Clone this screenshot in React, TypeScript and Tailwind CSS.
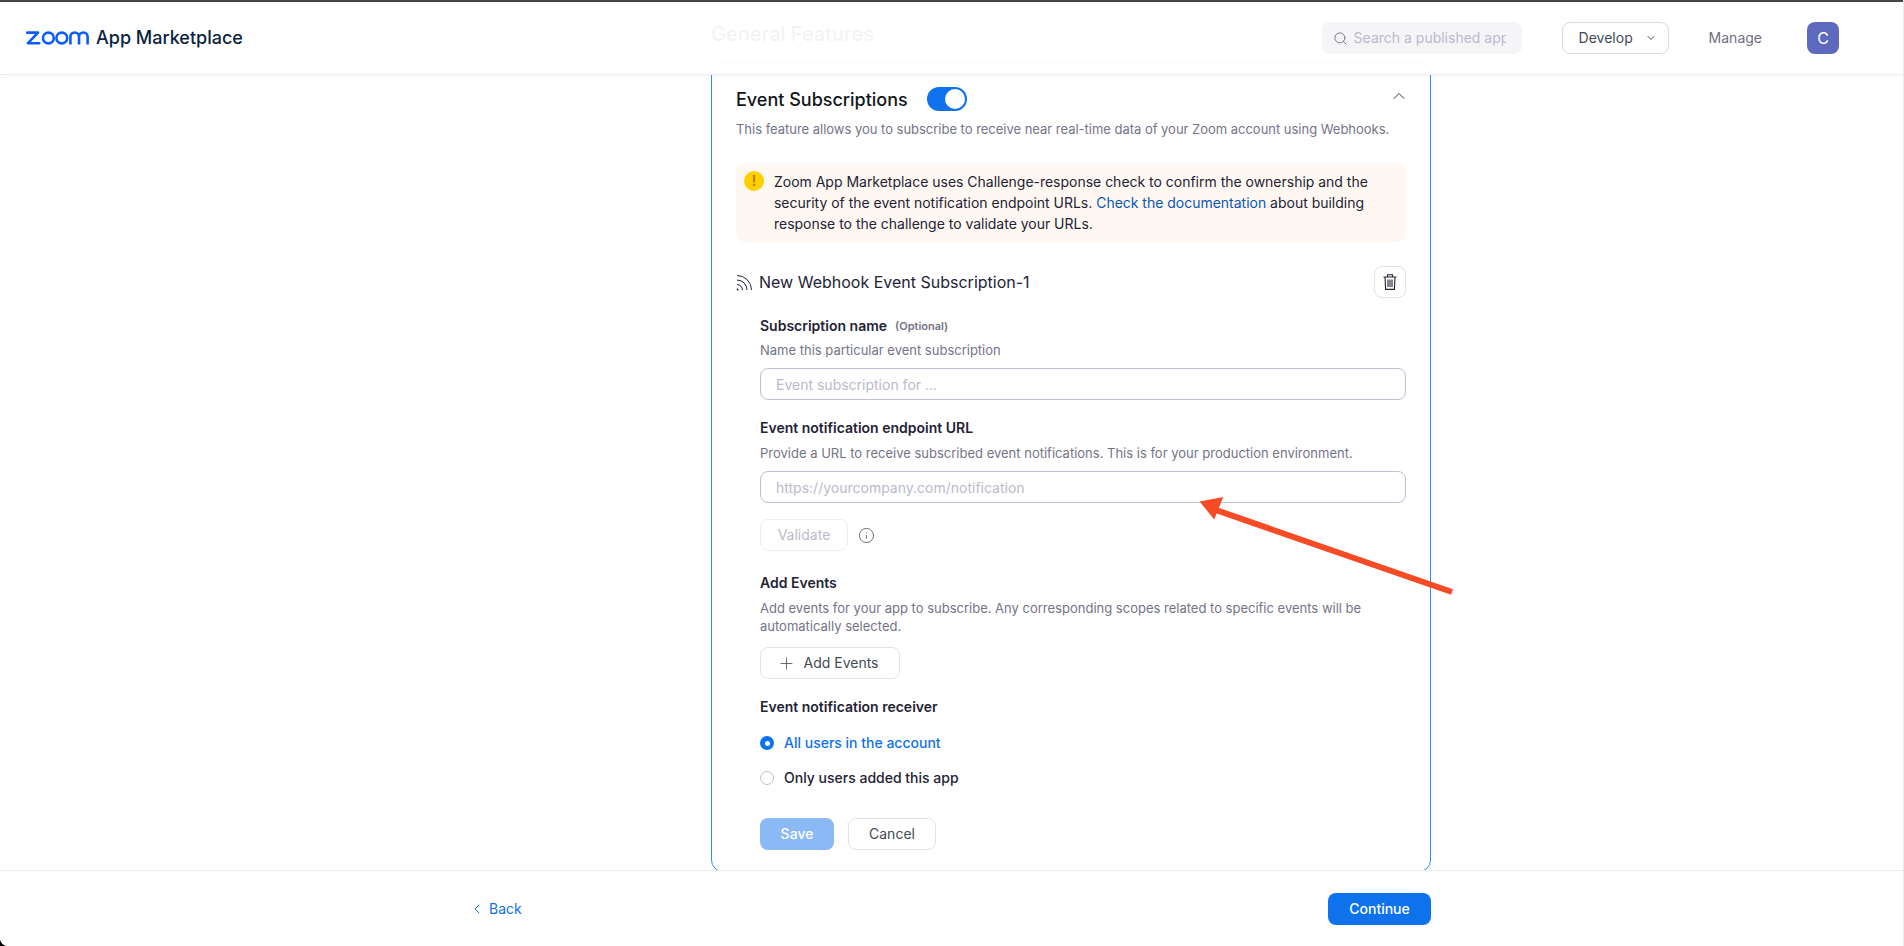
import { ChevronDown, ChevronLeft, ChevronUp, Info, Plus, Search } from 'lucide-react'

const ZoomLogo = () => (
  <svg width="63" height="14" viewBox="0 0 63 14" fill="none" stroke="#0b5cff" strokeWidth="2.6">
    <path d="M1.2 1.6H12L2 12.2H13.2" strokeLinejoin="round" strokeLinecap="round" />
    <circle cx="22.4" cy="7" r="5.4" />
    <circle cx="35.8" cy="7" r="5.4" />
    <path d="M44.4 13.4V5.8a4.3 4.3 0 0 1 8.6 0v7.6M53 13.4V5.8a4.3 4.3 0 0 1 8.6 0v7.6" />
  </svg>
)

const TrashIcon = () => (
  <svg width="18" height="18" viewBox="0 0 18 18" fill="none" stroke="#232333" strokeWidth="1.1">
    <path d="M2.5 4h13M6.5 4V1.8h5V4M4 4l.6 12.4h8.8L14 4M7 6.5v7.5M9 6.5v7.5M11 6.5v7.5" />
  </svg>
)

const FeedIcon = () => (
  <svg width="17" height="17" viewBox="0 0 17 17" fill="none" stroke="#232333" strokeWidth="1" className="shrink-0">
    <path d="M1 10.5a5.5 5.5 0 0 1 5.5 5.5M1 6a10 10 0 0 1 10 10M1 1.5A14.5 14.5 0 0 1 15.5 16" />
    <circle cx="1.6" cy="15.4" r="1" fill="#232333" stroke="none" />
  </svg>
)

const Arrow = () => (
  <svg
    className="absolute left-[1190px] top-[490px] pointer-events-none"
    width="270"
    height="110"
    viewBox="0 0 270 110"
    fill="none"
  >
    <path d="M20 18L262 102" stroke="#f74b25" strokeWidth="6" />
    <path d="M11 12L32 8L24 28Z" fill="#f74b25" stroke="#f74b25" strokeWidth="1.5" />
  </svg>
)

const labelClass = 'text-sm leading-5 font-semibold text-[#232333]'
const hintClass = 'text-[13px] leading-[18px] text-[#747487]'
const inputClass =
  'block w-full h-8 rounded-lg border border-[#bfbfd1] bg-white px-[15px] text-sm outline-none placeholder:text-[#babacc]'
const outlineBtn = 'h-8 rounded-lg border border-[#dfe3e8] bg-white text-sm'

export default function App() {
  return (
    <div className="h-[946px] bg-black">
      <div className="relative h-[946px] overflow-hidden rounded-bl-lg border-r border-r-[#ececec] bg-white flex flex-col font-['Inter',sans-serif] text-[#232333]">
        <header className="relative z-10 h-[75px] shrink-0 flex items-center border-b border-t-2 border-b-[#ededf0] border-t-[#444444] bg-white/95 shadow-[0_1px_4px_rgba(0,0,0,0.04)] pl-[26px]">
          <ZoomLogo />
          <span className="ml-[7px] text-lg font-medium text-[#0b1f3f]">App Marketplace</span>
          <div className="ml-auto flex items-center">
            <div className="flex items-center w-[200px] h-8 rounded-lg bg-[#f5f5f8] pl-[11px] pr-4">
              <Search size={15} strokeWidth={1.5} className="text-[#6e7680] shrink-0" />
              <input
                className="ml-[6px] min-w-0 flex-1 bg-transparent text-sm outline-none placeholder:text-[#babacc]"
                placeholder="Search a published app"
              />
            </div>
            <div className="ml-10 flex items-center w-[107px] h-8 rounded-lg border border-[#d9d9e5] pl-4 text-sm text-[#444b53]">
              Develop
              <ChevronDown size={12} strokeWidth={2} className="ml-3" />
            </div>
            <span className="ml-10 text-sm text-[#6e6e7f]">Manage</span>
            <div className="ml-[45px] mr-[64px] flex items-center justify-center w-8 h-8 rounded-lg bg-[#5c69bf] text-base text-white">
              C
            </div>
          </div>
        </header>

        <main className="flex-1 min-h-0 overflow-hidden -mt-[75px] pl-[711px] pt-[20px]">
          <h2 className="text-xl leading-7 font-medium text-[#131619] mb-[14px]">General Features</h2>
          <section className="w-[720px] rounded-xl border border-[#2d8cff] px-6 pt-6 pb-[21px]">
            <div className="flex items-center h-6">
              <h3 className="mt-[2px] text-lg font-medium text-[#131619]">Event Subscriptions</h3>
              <div className="ml-[19px] flex items-center justify-end w-10 h-6 rounded-full bg-[#0e72ed] pr-[2px]">
                <div className="w-5 h-5 rounded-full bg-white" />
              </div>
              <ChevronUp size={20} strokeWidth={1.1} className="ml-auto mr-[-3px] -mt-[6px] text-[#232333]" />
            </div>
            <p className="mt-2 text-[13px] leading-5 tracking-[-0.02px] text-[#747487]">
              This feature allows you to subscribe to receive near real-time data of your Zoom account using Webhooks.
            </p>

            <div className="mt-6 flex rounded-lg bg-[#fff8f2] py-2 pl-2 pr-3">
              <div className="flex items-center justify-center w-5 h-5 shrink-0 rounded-full bg-[#ffd000] text-sm font-semibold text-[#b57a00]">
                !
              </div>
              <p className="ml-[10px] text-sm leading-[21px] tracking-[-0.015px] text-[#232333]">
                Zoom App Marketplace uses Challenge-response check to confirm the ownership and the security of the
                event notification endpoint URLs. <span className="text-[#0956b5]">Check the documentation</span> about
                building response to the challenge to validate your URLs.
              </p>
            </div>

            <div className="mt-6 flex items-center h-8">
              <FeedIcon />
              <span className="ml-[6px] text-base text-[#232333]">New Webhook Event Subscription-1</span>
              <button className="ml-auto flex items-center justify-center w-8 h-8 rounded-lg border border-[#dfe3e8] bg-white">
                <TrashIcon />
              </button>
            </div>

            <div className="ml-6">
              <div className="mt-[18px] flex items-center">
                <span className={labelClass}>Subscription name</span>
                <span className="ml-2 text-[11px] font-semibold text-[#747487]">(Optional)</span>
              </div>
              <p className={`mt-[5px] ${hintClass}`}>Name this particular event subscription</p>
              <input className={`mt-[9px] ${inputClass}`} placeholder="Event subscription for ..." />

              <div className={`mt-[18px] ${labelClass}`}>Event notification endpoint URL</div>
              <p className={`mt-[6px] ${hintClass}`}>
                Provide a URL to receive subscribed event notifications. This is for your production environment.
              </p>
              <input className={`mt-[9px] ${inputClass}`} placeholder="https://yourcompany.com/notification" />

              <div className="mt-4 flex items-center">
                <button className="h-8 w-[88px] rounded-lg border border-[#edeef1] bg-white text-sm text-[#babacc]">
                  Validate
                </button>
                <Info size={17} strokeWidth={1.1} className="ml-[10px] text-[#444b53]" />
              </div>

              <div className={`mt-[22px] ${labelClass}`}>Add Events</div>
              <p className={`mt-[6px] ${hintClass}`}>
                Add events for your app to subscribe. Any corresponding scopes related to specific events will be
                automatically selected.
              </p>
              <button className={`mt-3 flex items-center justify-center w-[140px] pr-1 text-[#444b53] ${outlineBtn}`}>
                <Plus size={19} strokeWidth={1} className="mr-[7px]" />
                Add Events
              </button>

              <div className={`mt-[18px] ${labelClass}`}>Event notification receiver</div>
              <div className="mt-4 flex items-center h-5">
                <div className="flex items-center justify-center w-[14px] h-[14px] rounded-full bg-[#0e72ed]">
                  <div className="w-[5px] h-[5px] rounded-full bg-white" />
                </div>
                <span className="ml-[10px] text-sm font-medium text-[#0e72ed]">All users in the account</span>
              </div>
              <div className="mt-[15px] flex items-center h-5">
                <div className="w-[14px] h-[14px] rounded-full border border-[#bfbfd1] bg-white" />
                <span className="ml-[10px] text-sm font-medium text-[#232333]">Only users added this app</span>
              </div>

              <div className="mt-[30px] flex">
                <button className="h-8 w-[74px] rounded-lg bg-[#8ab9f6] text-sm font-medium text-white">Save</button>
                <button className={`ml-[14px] w-[88px] text-[#444b53] ${outlineBtn}`}>Cancel</button>
              </div>
            </div>
          </section>
        </main>

        <footer className="relative z-10 h-[76px] shrink-0 flex items-center justify-between border-t border-[#ededf0] bg-white pl-[469px] pr-[472px]">
          <div className="flex items-center text-sm text-[#0e72ed]">
            <ChevronLeft size={16} strokeWidth={1.5} />
            <span className="ml-1">Back</span>
          </div>
          <button className="h-8 w-[103px] rounded-lg bg-[#0e72ed] text-sm font-medium text-white">Continue</button>
        </footer>

        <Arrow />
      </div>
    </div>
  )
}
